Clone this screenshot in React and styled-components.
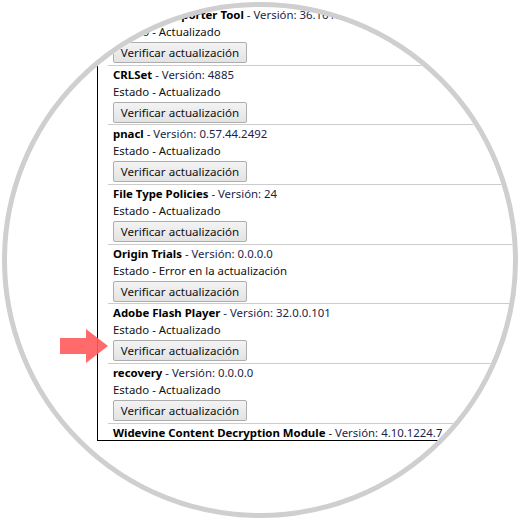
import React from "react";
import styled, { createGlobalStyle } from "styled-components";

const GlobalStyle = createGlobalStyle`
  html, body {
    margin: 0;
    padding: 0;
    background: #ffffff;
  }
`;

const Stage = styled.div`
  position: relative;
  width: 520px;
  height: 520px;
  display: flex;
  align-items: center;
  justify-content: center;
  overflow: hidden;
  background: #ffffff;
`;

const Lens = styled.div`
  width: 516px;
  height: 516px;
  box-sizing: border-box;
  border: 5px solid #cfcfcf;
  border-radius: 50%;
  overflow: hidden;
  background: #ffffff;
  font-family: "Noto Sans", "Liberation Sans", sans-serif;
  font-size: 11.4px;
  color: #111111;
`;

const Panel = styled.div`
  margin: -2px 0 0 90px;
  width: 480px;
  height: 435px;
  border-left: 1px solid #000000;
  border-bottom: 1px solid #000000;
  overflow: hidden;
`;

const List = styled.ul`
  list-style: none;
  margin: 0;
  padding: 0 0 0 10px;
`;

const Item = styled.li`
  box-sizing: border-box;
  height: ${p => (p.$last ? "auto" : "59.7px")};
  border-top: 1px solid #cccccc;
  padding-left: 5px;
`;

const Line = styled.div`
  height: 17px;
  line-height: 17px;
  white-space: nowrap;
`;

const Name = styled.span`
  font-weight: bold;
  color: #000000;
`;

const Version = styled.span`
  color: #1c2448;
`;

const CheckButton = styled.button`
  display: block;
  margin-top: 2px;
  box-sizing: border-box;
  width: 134px;
  height: 21px;
  padding: 0;
  border: 1px solid #adadad;
  border-radius: 2px;
  background: linear-gradient(#f3f3f3, #e3e3e3);
  font-family: inherit;
  font-size: 11.6px;
  color: #111111;
  cursor: pointer;
`;

const Arrow = styled.svg`
  position: absolute;
  left: 58px;
  top: 328px;
  opacity: 0.9;
`;

const components = [
  { name: "Software Reporter Tool", version: "36.161.200", status: "Actualizado" },
  { name: "CRLSet", version: "4885", status: "Actualizado" },
  { name: "pnacl", version: "0.57.44.2492", status: "Actualizado" },
  { name: "File Type Policies", version: "24", status: "Actualizado" },
  { name: "Origin Trials", version: "0.0.0.0", status: "Error en la actualización" },
  { name: "Adobe Flash Player", version: "32.0.0.101", status: "Actualizado" },
  { name: "recovery", version: "0.0.0.0", status: "Actualizado" },
  { name: "Widevine Content Decryption Module", version: "4.10.1224.7", status: null }
];

export default function App() {
  return (
    <>
      <GlobalStyle />
      <Stage>
        <Lens>
          <Panel>
            <List>
              {components.map(c => (
                <Item key={c.name} $last={!c.status}>
                  <Line>
                    <Name>{c.name}</Name>
                    <Version> - Versión: {c.version}</Version>
                  </Line>
                  {c.status && (
                    <>
                      <Line>Estado - {c.status}</Line>
                      <CheckButton type="button">Verificar actualización</CheckButton>
                    </>
                  )}
                </Item>
              ))}
            </List>
          </Panel>
        </Lens>
        <Arrow width="52" height="36" viewBox="0 0 52 36">
          <polygon points="2,10 28,10 28,1 50,18 28,35 28,26 2,26" fill="#ff5c5c" />
        </Arrow>
      </Stage>
    </>
  );
}
